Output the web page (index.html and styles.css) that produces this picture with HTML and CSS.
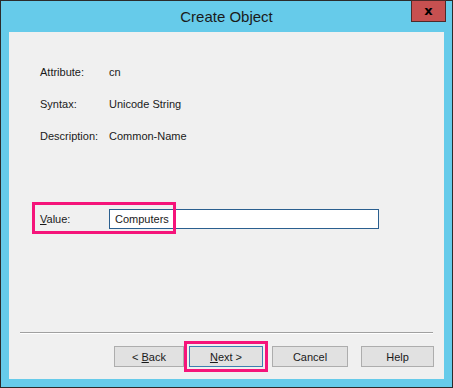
FILE: index.html
```html
<!DOCTYPE html>
<html lang="en">
<head>
  <meta charset="UTF-8" />
  <title>Create Object</title>
  <link rel="stylesheet" href="styles.css">
</head>
<body>
  <div class="window">
    <div class="titlebar">
      <span class="title">Create Object</span>
      <button class="close">x</button>
    </div>

    <div class="content">
      <div class="info">
        <div class="row"><span class="label">Attribute:</span><span>cn</span></div>
        <div class="row"><span class="label">Syntax:</span><span>Unicode String</span></div>
        <div class="row"><span class="label">Description:</span><span>Common-Name</span></div>
      </div>

      <div class="value-row">
        <label class="label" for="value"><u>V</u>alue:</label>
        <input type="text" id="value" value="Computers">
        <div class="mark mark-value"></div>
      </div>

      <hr class="sep">

      <div class="buttons">
        <button class="btn back">&lt; <u>B</u>ack</button>
        <span class="next-wrap">
          <button class="btn next"><u>N</u>ext &gt;</button>
          <span class="mark mark-next"></span>
        </span>
        <button class="btn cancel">Cancel</button>
        <button class="btn help">Help</button>
      </div>
    </div>
  </div>
</body>
</html>
```

FILE: styles.css
```css
body {
  margin: 0;
  font-family: 'Liberation Sans', Arial, sans-serif;
  background-color: #ffffff;
}

.window {
  width: 453px;
  height: 388px;
  box-sizing: border-box;
  border: 1px solid #2b2b2b;
  background-color: #66cbea;
  padding: 0 8px 8px 8px;
  display: flex;
  flex-direction: column;
}

.titlebar {
  position: relative;
  height: 31px;
  flex-shrink: 0;
  display: flex;
  align-items: center;
  justify-content: center;
}

.title {
  font-size: 15px;
  color: #1b1b1b;
}

.close {
  position: absolute;
  top: -1px;
  right: -2px;
  width: 35px;
  height: 22px;
  box-sizing: border-box;
  background-color: #c75050;
  border: 1px solid #4e2a2a;
  color: #000000;
  font-family: 'DejaVu Sans', sans-serif;
  font-weight: bold;
  font-size: 13px;
  line-height: 16px;
  padding: 0;
}

.content {
  flex: 1;
  min-height: 0;
  background-color: #f0f0f0;
  box-sizing: border-box;
  font-size: 11px;
  color: #1a1a1a;
  padding-left: 31px;
  display: flex;
  flex-direction: column;
}

.info {
  margin-top: 24px;
}

.row {
  height: 32px;
  display: flex;
  align-items: center;
}

.label {
  width: 69px;
  flex-shrink: 0;
}

.value-row {
  position: relative;
  margin-top: 57px;
  display: flex;
  align-items: center;
}

.value-row input {
  width: 270px;
  height: 20px;
  box-sizing: border-box;
  border: 1px solid #2a5f8f;
  background: #ffffff;
  font-family: 'Liberation Sans', Arial, sans-serif;
  font-size: 11px;
  color: #1a1a1a;
  padding: 0 0 0 5px;
  margin: 0;
}

.mark {
  position: absolute;
  border: 3px solid #f5147a;
  box-sizing: border-box;
}

.mark-value {
  left: -8px;
  top: -7px;
  width: 144px;
  height: 32px;
}

.sep {
  margin: 103px 11px 0 -20px;
  border: none;
  border-top: 1px solid #a0a0a0;
  border-bottom: 1px solid #ffffff;
  height: 0;
}

.buttons {
  display: flex;
  margin-top: 12px;
  padding-left: 74px;
}

.btn {
  height: 21px;
  box-sizing: border-box;
  background-color: #e1e1e1;
  border: 1px solid #adadad;
  font-family: 'Liberation Sans', Arial, sans-serif;
  font-size: 11px;
  color: #1a1a1a;
  padding: 0;
}

.back {
  width: 70px;
}

.next-wrap {
  position: relative;
  margin-left: 5px;
}

.next {
  width: 74px;
  border-color: #3c7fb1;
}

.mark-next {
  left: -5px;
  top: -5px;
  width: 84px;
  height: 31px;
}

.cancel {
  width: 76px;
  margin-left: 9px;
}

.help {
  width: 73px;
  margin-left: 13px;
}
```
